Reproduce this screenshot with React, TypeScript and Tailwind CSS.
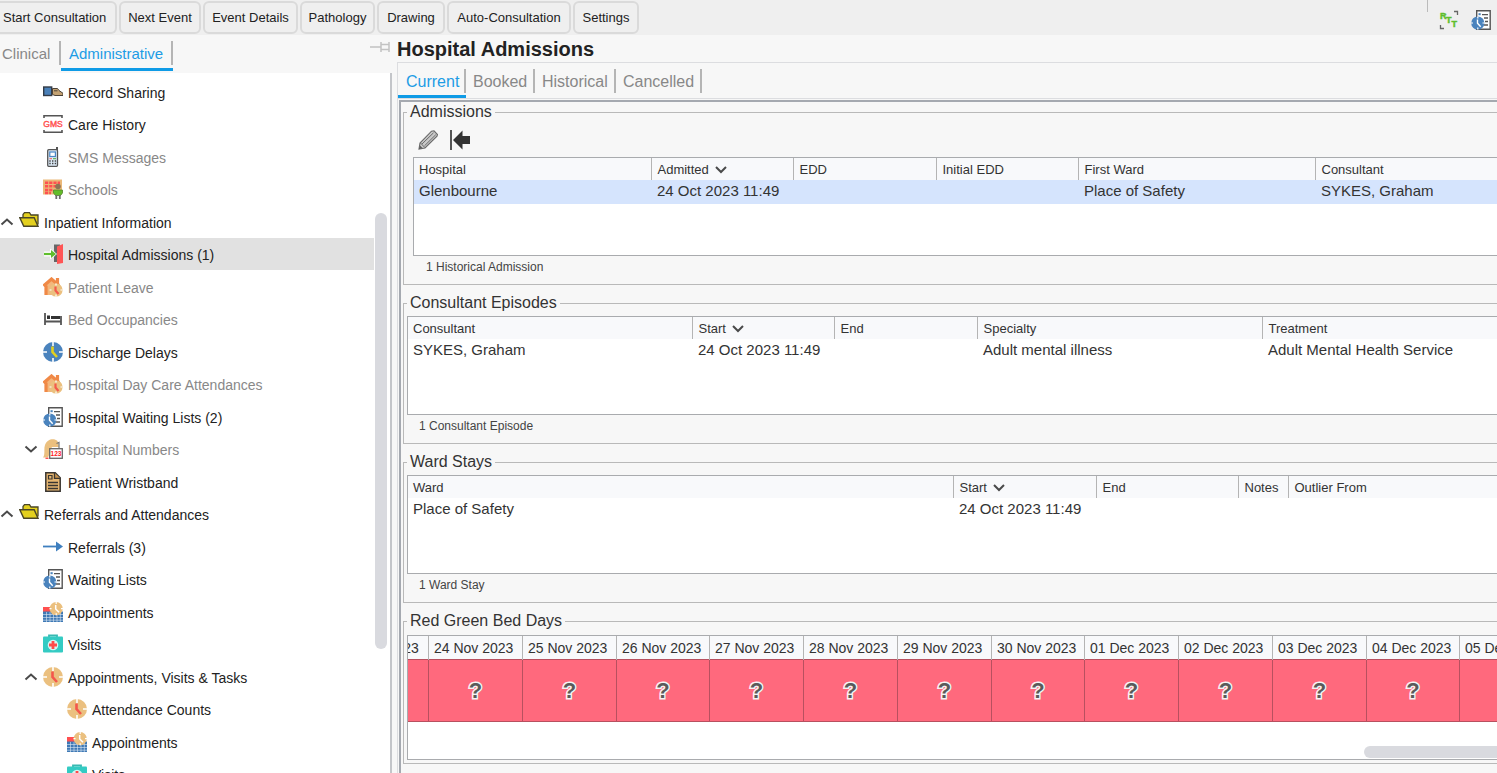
import { useState } from 'react'
import type { ReactNode } from 'react'

/* ---------- icons ---------- */

function Icon({ children }: { children: ReactNode }) {
  return (
    <svg className="w-5 h-5 shrink-0" viewBox="0 0 20 20" fill="none" aria-hidden="true">
      {children}
    </svg>
  )
}

function ClockFace({ face, hand }: { face: string; hand: string }) {
  return (
    <>
      <circle cx="10" cy="10" r="10" fill={face} />
      <path d="M10 0v4M10 16v4M0 10h4M16 10h4" stroke="#fff" strokeWidth="1.6" />
      <path d="M9.5 4.5V10l4.5 5" stroke={hand} strokeWidth="2.6" />
    </>
  )
}

function Chevron({ dir }: { dir: 'up' | 'down' }) {
  return (
    <svg className="w-3.5 h-3.5 shrink-0" viewBox="0 0 14 14" fill="none" stroke="#4a4a4a" strokeWidth="2" aria-hidden="true">
      <path d={dir === 'up' ? 'M1.5 9.5 7 4.5l5.5 5' : 'M1.5 4.5 7 9.5l5.5-5'} />
    </svg>
  )
}

const SharingIcon = () => (
  <Icon>
    <rect x="0.7" y="5" width="8" height="8.5" fill="#4a80b8" stroke="#333b46" strokeWidth="1.4" />
    <path d="M9.5 6.5h5l1.5 2 4 2.8v2.2h-8l-2.5-1z" fill="#c3a273" stroke="#4b4238" strokeWidth="1" />
    <path d="M11 8.8h3.5" stroke="#4b4238" />
  </Icon>
)

const GmsIcon = () => (
  <Icon>
    <path d="M1 4V1.8h18V4M1 16v2.2h18V16" stroke="#555" strokeWidth="1.6" />
    <text x="10" y="13.3" textAnchor="middle" fontSize="8.5" fill="#ff4f4f" stroke="#ff4f4f" strokeWidth=".4" fontFamily="Liberation Sans, sans-serif">GMS</text>
  </Icon>
)

const PhoneIcon = () => (
  <Icon>
    <path d="M14 0v4" stroke="#555" strokeWidth="2" />
    <rect x="4.7" y="2.7" width="9.8" height="16.6" rx="1" fill="#dbe9f6" stroke="#555" strokeWidth="1.3" />
    <rect x="6.8" y="5" width="5.6" height="4.5" fill="#fff" stroke="#4a86c5" strokeWidth="1.2" />
    <path d="M6.5 11.7h2.5" stroke="#f55" />
    <path d="M10 11.7h3" stroke="#4fae3c" />
    <path d="M6.3 14h1.4M9 14h1.4M11.7 14h1.4M6.3 16.5h1.4M9 16.5h1.4M11.7 16.5h1.4" stroke="#444" strokeWidth="1.3" />
  </Icon>
)

const SchoolIcon = () => (
  <Icon>
    <path d="M0 .5h19v15H0z" fill="#ebb878" />
    <path d="M2 3.7h15M2 7.3h14M2 11h8M2 14h6" stroke="#ff5050" strokeWidth="2.6" strokeDasharray="3.2 1" />
    <circle cx="15" cy="7.5" r="2.8" fill="#8d7455" />
    <path d="M10.5 11h9v3l-2 2.5h-5l-2-2.5z" fill="#63bd2a" stroke="#55852f" strokeWidth=".8" />
    <path d="M13.3 16v4M16.8 16v4" stroke="#6c6c6c" strokeWidth="1.8" />
  </Icon>
)

const FolderIcon = () => (
  <Icon>
    <path d="M4 5V2.5L5.5.7h5L12 3h7v9.5" fill="#e3d01e" stroke="#4a4626" strokeWidth="1.3" />
    <path d="M.8 5.7h14.4L19 14.3H4.8z" fill="#e3d01e" stroke="#4a4626" strokeWidth="1.4" />
  </Icon>
)

const AdmissionIcon = () => (
  <Icon>
    <path d="M11 .5h6V18h-6z" fill="#666" />
    <path d="M14 2.5 20 0v19l-6 1z" fill="#ff5555" />
    <path d="M1 10h10.5" stroke="#fff" strokeWidth="5" />
    <path d="M7 4.5 14 10l-7 5.5z" fill="#fff" />
    <path d="M1 10h9" stroke="#5fbe2c" strokeWidth="2.2" />
    <path d="M8 6 13 10 8 14z" fill="#5fbe2c" />
  </Icon>
)

const HouseClockIcon = () => (
  <Icon>
    <path d="M3 7.500 9 3l6 4.500V18H3z" fill="#f3b77c" />
    <path d="M.5 9 8.5 2l7.5 6.500M3 8.500V18M14.500 1v6" stroke="#f08947" strokeWidth="3.2" />
    <circle cx="13" cy="13" r="6.6" fill="#ebc07f" />
    <path d="M13 6.5v2M13 17.500v2M6.500 13h2M17.500 13h2" stroke="#fff" strokeWidth="1.2" />
    <path d="M12.5 9.5v4l3 3.5" stroke="#f45a4c" strokeWidth="2.2" />
  </Icon>
)

const BedIcon = () => (
  <Icon>
    <path d="M2 4v12M18 7v9M2 12.5h16" stroke="#555" strokeWidth="1.8" />
    <path d="M4 6.5h3V10H4zM8 7h9v3H8z" fill="#333" />
  </Icon>
)

const BlueClockIcon = () => <Icon><ClockFace face="#4a83bd" hand="#e3d01e" /></Icon>
const TanClockIcon = () => <Icon><ClockFace face="#ebc07f" hand="#f4574c" /></Icon>

const WaitingIcon = () => (
  <Icon>
    <path d="M5.7.8h13.5v18.4H5.7z" fill="#fff" stroke="#555" strokeWidth="1.4" />
    <path d="M11 4.7h6M13 8h4M14 11.5h3M13 15h4" stroke="#555" strokeWidth="1.3" />
    <path d="M7.5 3.2h2.2v2H7.5z" fill="#4a83bd" />
    <circle cx="6.8" cy="13" r="6.6" fill="#4a83bd" />
    <path d="M6.8 6.4v2M6.8 17.5v2M0 13h2M11.5 13h2" stroke="#fff" strokeWidth="1.2" />
    <path d="M6.5 9.5v3.7l3.2 3.6" stroke="#fff" strokeWidth="1.4" />
  </Icon>
)

const NumbersIcon = () => (
  <Icon>
    <path d="M0 18.5C2.5 15 .5 10 2 6 4 0 11 -1.2 14.5 2L16 8H9c-2 3-2 7-4 10.5z" fill="#ebc07f" />
    <path d="M13.5 4.5 16 3.5V10" stroke="#777" strokeWidth="1.2" />
    <path d="M2.5 19.3h3" stroke="#f55" strokeWidth="1.4" />
    <rect x="6.7" y="9.7" width="12.6" height="9.6" fill="#fff" stroke="#666" strokeWidth="1.3" />
    <text x="13" y="17.3" textAnchor="middle" fontSize="6.5" fontWeight="700" fill="#f22" fontFamily="Liberation Sans, sans-serif">123</text>
  </Icon>
)

const WristbandIcon = () => (
  <Icon>
    <path d="M2.8.8h9.4l5 5v13.4H2.8z" fill="#e6b671" stroke="#3a3632" strokeWidth="1.5" />
    <path d="M11.5.8v5.5h5.7" fill="#c9944e" stroke="#3a3632" strokeWidth="1.3" />
    <path d="M5.5 3.5H9V7H5.5z" stroke="#3a3632" strokeWidth="1.2" />
    <path d="M5 10.5h10M5 13.5h10M5 16.5h10" stroke="#3a3632" strokeWidth="1.3" />
  </Icon>
)

const ArrowIcon = () => (
  <Icon>
    <path d="M0 9.5h15" stroke="#3f7fbf" strokeWidth="1.8" />
    <path d="M13 4.5 20 9.5l-7 5z" fill="#3f7fbf" />
  </Icon>
)

const AppointmentIcon = () => (
  <Icon>
    <path d="M0 5h9v5H0z" fill="#ff5050" />
    <path d="M0 9.5h20V20H0z" fill="#3f79b5" />
    <path d="M0 12.5h20M0 15.5h20M0 18.2h20M3.5 10v10M7 10v10M10.5 10v10M14 10v10M17.3 10v10" stroke="#dce8f4" strokeWidth=".6" />
    <circle cx="13.2" cy="6.7" r="6.6" fill="#ebc07f" />
    <path d="M13.2 0v2M13.2 11.3v2M6.5 6.7h2M18 6.7h2" stroke="#fff" strokeWidth="1.2" />
    <path d="M12.7 3v4l3.3 3.3" stroke="#fff" strokeWidth="1.5" />
  </Icon>
)

const VisitIcon = () => (
  <Icon>
    <path d="M6 4.5v-3h8v3" stroke="#38b9b2" strokeWidth="1.8" />
    <rect y="2.5" width="20" height="16" rx="1" fill="#34cbc3" />
    <circle cx="10" cy="11" r="5.3" fill="#d6f5f3" />
    <path d="M10 7v8M6 11h8" stroke="#ff4a4a" strokeWidth="2.8" />
  </Icon>
)

const RttIcon = () => (
  <Icon>
    <path d="M15 1.5h3.5V5M1.5 15v3.5H5" stroke="#666" strokeWidth="1.3" />
    <text fontSize="9" fontWeight="700" fill="#5fbe2c" stroke="#5fbe2c" strokeWidth=".5" fontFamily="Liberation Sans, sans-serif">
      <tspan x="1" y="8.5">R</tspan>
      <tspan x="7" y="12.5">T</tspan>
      <tspan x="12.5" y="16.5">T</tspan>
    </text>
  </Icon>
)

const PinIcon = () => (
  <svg className="w-5 h-3" viewBox="0 0 20 12" fill="none" stroke="#c2c2c2" strokeWidth="1.5" aria-hidden="true">
    <path d="M0 6h11M11 1v10M19 1v10M11 3.5h8M11 8.5h8" />
  </svg>
)

const PencilIcon = () => (
  <Icon>
    <path d="M1 19l1-6L13.5 1.2 16 .8l3.5 3.7-.5 1.7L7 18z" fill="#c9c9c9" stroke="#6a6a6a" strokeWidth="1.1" />
    <path d="M4 14 15.5 2.8M6.5 15.8 17.8 4.7M2.5 13 7 17.7" stroke="#6a6a6a" strokeWidth="1" />
    <path d="M.8 19.2 2 15.5 4.5 18z" fill="#5c5c5c" />
  </Icon>
)

const BackToStartIcon = () => (
  <Icon>
    <path d="M1 0v20" stroke="#555" strokeWidth="2" />
    <path d="M3 10 12.5.5V6H20v8h-7.5v5.5z" fill="#333" />
  </Icon>
)

/* ---------- data ---------- */

const ACTIONS = [
  { label: 'Start Consultation', cls: 'w-[117px] rounded-l-none border-l-0 text-left pl-[3px]' },
  { label: 'Next Event', cls: 'w-[82px]' },
  { label: 'Event Details', cls: 'w-[95px]' },
  { label: 'Pathology', cls: 'w-[75px]' },
  { label: 'Drawing', cls: 'w-[68px]' },
  { label: 'Auto-Consultation', cls: 'w-[124px]' },
  { label: 'Settings', cls: 'w-[66px]' },
]

type Node = {
  label: string
  icon: () => ReactNode
  level: 0 | 1 | 2
  dim?: boolean
  chevron?: 'up' | 'down'
}

const TREE: Node[] = [
  { label: 'Record Sharing', icon: SharingIcon, level: 1 },
  { label: 'Care History', icon: GmsIcon, level: 1 },
  { label: 'SMS Messages', icon: PhoneIcon, level: 1, dim: true },
  { label: 'Schools', icon: SchoolIcon, level: 1, dim: true },
  { label: 'Inpatient Information', icon: FolderIcon, level: 0, chevron: 'up' },
  { label: 'Hospital Admissions (1)', icon: AdmissionIcon, level: 1 },
  { label: 'Patient Leave', icon: HouseClockIcon, level: 1, dim: true },
  { label: 'Bed Occupancies', icon: BedIcon, level: 1, dim: true },
  { label: 'Discharge Delays', icon: BlueClockIcon, level: 1 },
  { label: 'Hospital Day Care Attendances', icon: HouseClockIcon, level: 1, dim: true },
  { label: 'Hospital Waiting Lists (2)', icon: WaitingIcon, level: 1 },
  { label: 'Hospital Numbers', icon: NumbersIcon, level: 1, dim: true, chevron: 'down' },
  { label: 'Patient Wristband', icon: WristbandIcon, level: 1 },
  { label: 'Referrals and Attendances', icon: FolderIcon, level: 0, chevron: 'up' },
  { label: 'Referrals (3)', icon: ArrowIcon, level: 1 },
  { label: 'Waiting Lists', icon: WaitingIcon, level: 1 },
  { label: 'Appointments', icon: AppointmentIcon, level: 1 },
  { label: 'Visits', icon: VisitIcon, level: 1 },
  { label: 'Appointments, Visits & Tasks', icon: TanClockIcon, level: 1, chevron: 'up' },
  { label: 'Attendance Counts', icon: TanClockIcon, level: 2 },
  { label: 'Appointments', icon: AppointmentIcon, level: 2 },
  { label: 'Visits', icon: VisitIcon, level: 2 },
]

const INDENT = ['pl-0', 'pl-6', 'pl-12']

type Column = { label: string; value?: string; width?: string; sorted?: boolean }

const ADMISSIONS: Column[] = [
  { label: 'Hospital', value: 'Glenbourne', width: 'w-[237px]' },
  { label: 'Admitted', value: '24 Oct 2023 11:49', width: 'w-[142px]', sorted: true },
  { label: 'EDD', width: 'w-[143px]' },
  { label: 'Initial EDD', width: 'w-[142px]' },
  { label: 'First Ward', value: 'Place of Safety', width: 'w-[237px]' },
  { label: 'Consultant', value: 'SYKES, Graham' },
]

const EPISODES: Column[] = [
  { label: 'Consultant', value: 'SYKES, Graham', width: 'w-[284px]' },
  { label: 'Start', value: '24 Oct 2023 11:49', width: 'w-[142px]', sorted: true },
  { label: 'End', width: 'w-[143px]' },
  { label: 'Specialty', value: 'Adult mental illness', width: 'w-[285px]' },
  { label: 'Treatment', value: 'Adult Mental Health Service' },
]

const WARD_STAYS: Column[] = [
  { label: 'Ward', value: 'Place of Safety', width: 'w-[545px]' },
  { label: 'Start', value: '24 Oct 2023 11:49', width: 'w-[143px]', sorted: true },
  { label: 'End', width: 'w-[142px]' },
  { label: 'Notes', width: 'w-[50px]' },
  { label: 'Outlier From' },
]

const BED_DAYS = [
  '23 Nov 2023', '24 Nov 2023', '25 Nov 2023', '26 Nov 2023', '27 Nov 2023', '28 Nov 2023', '29 Nov 2023',
  '30 Nov 2023', '01 Dec 2023', '02 Dec 2023', '03 Dec 2023', '04 Dec 2023', '05 Dec 2023',
]

/* ---------- parts ---------- */

function Tab({ label, active, onClick, cls }: { label: string; active: boolean; onClick: () => void; cls: string }) {
  return (
    <button
      role="tab"
      aria-selected={active}
      onClick={onClick}
      className={`flex flex-col justify-between border-b-[3px] ${active ? 'border-[#0f9be6] text-[#1d9ce5]' : 'border-transparent text-[#888]'}`}
    >
      <span className={`h-6 pt-px flex items-center border-r-2 border-[#b5b5b5] whitespace-nowrap ${cls}`}>{label}</span>
    </button>
  )
}

function Group({ title, cls, children }: { title: string; cls: string; children: ReactNode }) {
  return (
    <fieldset className={`min-w-0 border border-r-0 border-[#b9b9b9] ${cls}`}>
      <legend className="px-[3px] text-base leading-5 text-[#333]">{title}</legend>
      {children}
    </fieldset>
  )
}

function Grid({ columns, selected = false }: { columns: Column[]; selected?: boolean }) {
  return (
    <div className="h-[99px] overflow-hidden border border-r-0 border-[#a9abae] bg-white">
      <table className="w-full table-fixed border-collapse text-left text-[#333]">
        <thead>
          <tr className="h-[22px] bg-[#f8f9fb] text-[13px] leading-4">
            {columns.map((c) => (
              <th key={c.label} className={`p-0 pl-1.5 pt-0.5 font-normal border-r border-[#b4b4b4] first:pl-[5px] last:border-r-0 ${c.width ?? ''}`}>
                <span className="flex items-center gap-1.5">
                  {c.label}
                  {c.sorted && (
                    <svg className="w-3 h-3" viewBox="0 0 12 12" fill="none" stroke="#4a4a4a" strokeWidth="2" aria-hidden="true">
                      <path d="M1 3 6 8l5-5" />
                    </svg>
                  )}
                </span>
              </th>
            ))}
          </tr>
        </thead>
        <tbody>
          <tr className={`h-6 text-[15px] leading-[22px] ${selected ? 'bg-[#d5e4fd]' : ''}`}>
            {columns.map((c) => (
              <td key={c.label} className="p-0 pl-1.5 first:pl-[5px] align-top whitespace-nowrap">{c.value}</td>
            ))}
          </tr>
        </tbody>
      </table>
    </div>
  )
}

function Sidebar() {
  const [tab, setTab] = useState('Administrative')
  const [current, setCurrent] = useState(5)

  return (
    <aside className="w-[392px] shrink-0 flex flex-col">
      <div className="h-[38px] shrink-0 flex justify-between">
        <div role="tablist" className="flex pt-1.5 h-9 text-[15px] leading-5">
          <Tab label="Clinical" active={tab === 'Clinical'} onClick={() => setTab('Clinical')} cls="w-[61px] pl-0.5" />
          <Tab label="Administrative" active={tab === 'Administrative'} onClick={() => setTab('Administrative')} cls="w-28 pl-2" />
        </div>
        <button aria-label="Pin panel" className="h-6 pr-0.5">
          <PinIcon />
        </button>
      </div>
      <div className="flex-1 min-h-0 flex bg-white border-r-2 border-[#c3c5c9] overflow-hidden">
        <ul className="flex-1 pt-0.5">
          {TREE.map(({ label, icon: NodeIcon, level, dim, chevron }, i) => (
            <li key={i} className="odd:h-[33px] even:h-8">
              <button
                onClick={() => setCurrent(i)}
                className={`w-full h-full flex items-center text-left text-sm ${INDENT[level]} ${i === current ? 'bg-[#e1e1e1]' : ''} ${dim ? 'text-[#888]' : 'text-[#222]'}`}
              >
                <span className="w-[19px] flex">{chevron && <Chevron dir={chevron} />}</span>
                <NodeIcon />
                <span className="pl-[5px] pt-0.5 whitespace-nowrap">{label}</span>
              </button>
            </li>
          ))}
        </ul>
        <div className="w-4 pt-[140px]">
          <div className="ml-px w-3 h-[436px] rounded-full bg-[#d9dadf]" />
        </div>
      </div>
    </aside>
  )
}

function BedDays() {
  return (
    <div className="h-[125px] flex flex-col justify-between overflow-hidden border border-r-0 border-[#a9abae] bg-white">
      {/* scrolled part-way into the first day */}
      <table className="-ml-[74px] w-max border-collapse text-left text-[#333]">
        <thead>
          <tr className="h-[23px] bg-[#f8f9fb] text-sm leading-4">
            {BED_DAYS.map((day) => (
              <th key={day} className="p-0 pl-[5px] pt-0.5 min-w-[94px] nth-[4n]:min-w-[93px] font-normal border-r border-[#b4b4b4]">{day}</th>
            ))}
          </tr>
        </thead>
        <tbody>
          <tr className="h-[62px] bg-[#ff697d]">
            {BED_DAYS.map((day, i) => (
              <td key={day} className="p-0 pt-1 text-center border border-[#b8505f]">
                {i > 0 && i < BED_DAYS.length - 1 && (
                  <span className="text-[22px] leading-6 font-bold text-[#5a5a5a] [-webkit-text-stroke:3px_#f3f3f3] [paint-order:stroke_fill]">?</span>
                )}
              </td>
            ))}
          </tr>
        </tbody>
      </table>
      <div className="flex justify-end pb-px">
        <div className="w-[133px] h-3 rounded-l-full bg-[#d9dadf]" />
      </div>
    </div>
  )
}

function Footnote({ cls, children }: { cls: string; children: ReactNode }) {
  return <p className={`text-xs leading-[22px] text-[#444] ${cls}`}>{children}</p>
}

const VIEWS = [
  { label: 'Current', cls: 'w-[68px] pl-2' },
  { label: 'Booked', cls: 'w-[69px] pl-[7px]' },
  { label: 'Historical', cls: 'w-[81px] pl-[7px]' },
  { label: 'Cancelled', cls: 'w-[86px] pl-[7px]' },
]

export default function App() {
  const [view, setView] = useState('Current')

  return (
    <div className="h-screen flex flex-col overflow-hidden bg-[#f7f7f7] font-['Liberation_Sans',Arial,sans-serif] text-[#222]">
      <header className="h-[35px] shrink-0 flex justify-between bg-[#efefef]">
        <div className="flex gap-0.5 py-px">
          {ACTIONS.map(({ label, cls }) => (
            <button key={label} className={`h-[33px] border-2 border-[#dadada] rounded-md text-[13px] whitespace-nowrap ${cls}`}>
              {label}
            </button>
          ))}
        </div>
        <div className="flex pr-1.5">
          <span className="h-3 w-3 border-l border-[#bbb]" />
          <button aria-label="Referral to treatment" className="mr-3 pt-1"><RttIcon /></button>
          <button aria-label="Waiting lists" className="pt-1"><WaitingIcon /></button>
        </div>
      </header>

      <div className="flex-1 min-h-0 flex">
        <Sidebar />

        <main className="flex-1 min-w-0 flex flex-col pl-[5px]">
          <h1 className="h-[27px] shrink-0 text-xl leading-7 font-bold">Hospital Admissions</h1>
          <div className="flex-1 min-h-0 flex flex-col border-t border-l border-[#dcdde0]">
            <div role="tablist" className="h-9 shrink-0 flex pt-1.5 text-base leading-5 border-b border-[#dcdde0]">
              {VIEWS.map(({ label, cls }) => (
                <Tab key={label} label={label} active={view === label} onClick={() => setView(label)} cls={cls} />
              ))}
            </div>

            <div className="flex-1 min-h-0 mt-px ml-px pl-0.5 flex flex-col gap-2 overflow-hidden border-t-2 border-l-2 border-[#a5a9b0]">
              <Group title="Admissions" cls="pl-[9px] pb-1.5 [&>legend]:-ml-1.5">
                <div className="h-[35px] pl-[5px] flex items-center gap-3">
                  <button aria-label="Edit admission"><PencilIcon /></button>
                  <button aria-label="Back to start"><BackToStartIcon /></button>
                </div>
                <Grid columns={ADMISSIONS} selected />
                <Footnote cls="pl-[13px]">1 Historical Admission</Footnote>
              </Group>

              <Group title="Consultant Episodes" cls="pl-[3px] pt-[3px] pb-1.5">
                <Grid columns={EPISODES} />
                <Footnote cls="pl-3">1 Consultant Episode</Footnote>
              </Group>

              <Group title="Ward Stays" cls="pl-[3px] pt-[3px] pb-1.5">
                <Grid columns={WARD_STAYS} />
                <Footnote cls="pl-3">1 Ward Stay</Footnote>
              </Group>

              <Group title="Red Green Bed Days" cls="pl-[3px] pt-1 pb-[3px]">
                <BedDays />
              </Group>
            </div>
          </div>
        </main>
      </div>
    </div>
  )
}
